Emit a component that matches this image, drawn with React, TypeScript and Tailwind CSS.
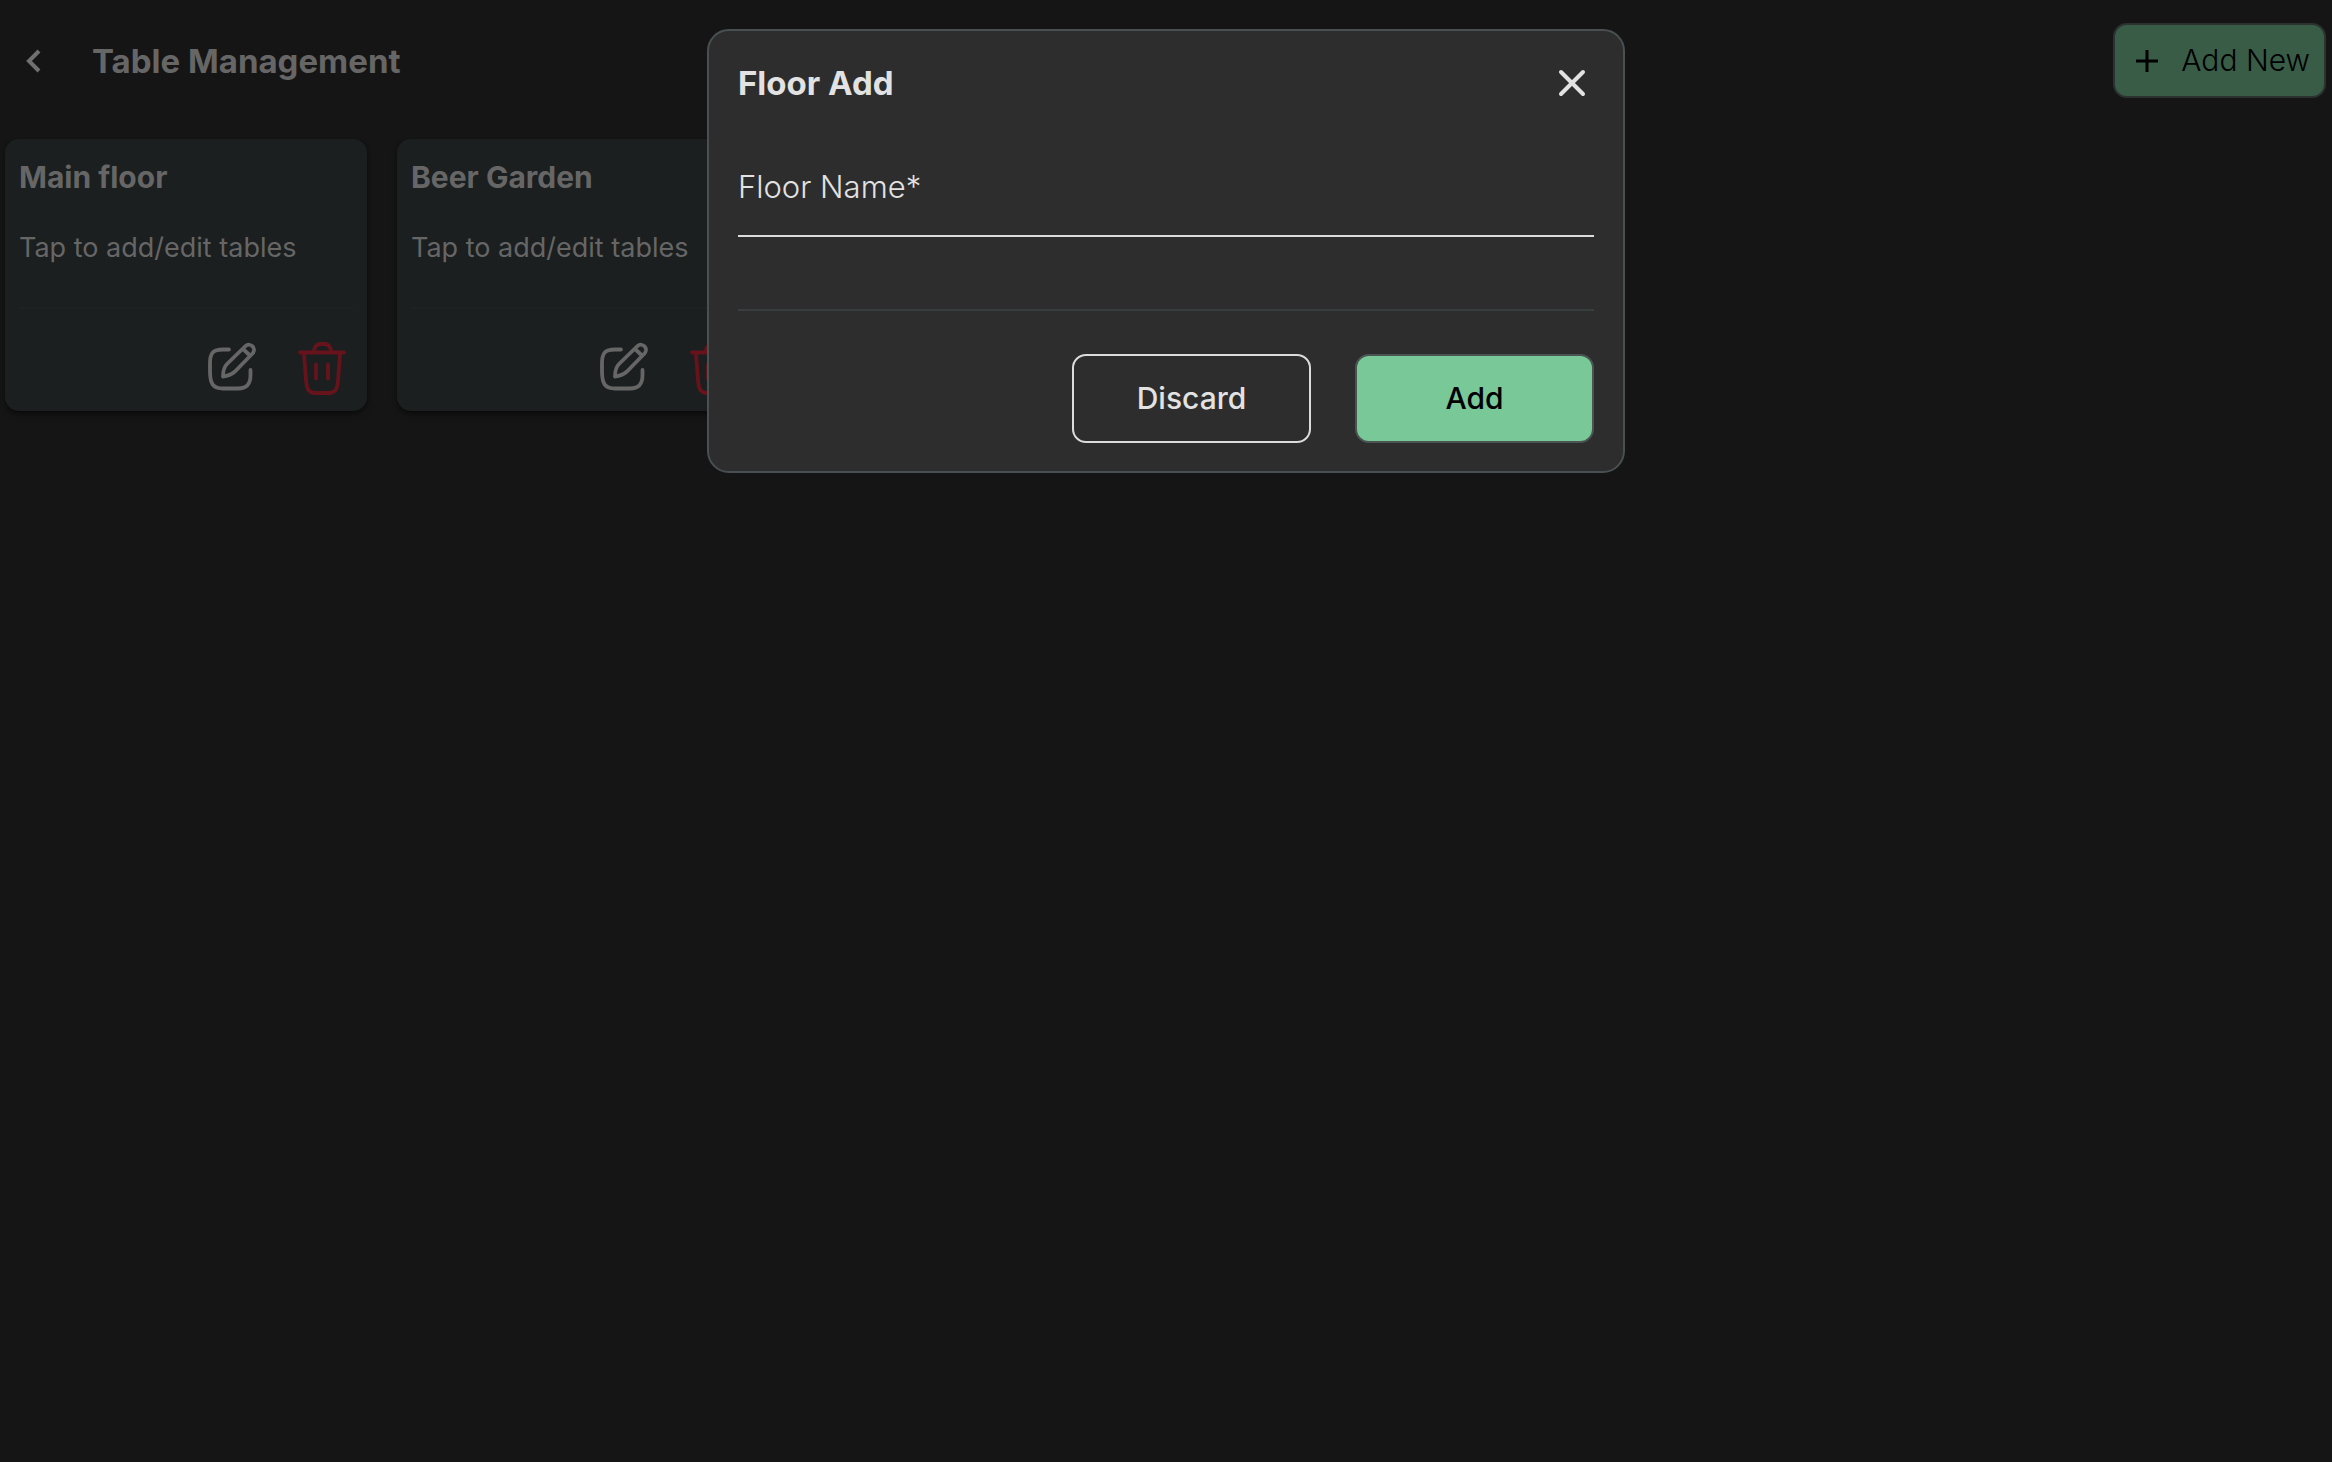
import { useState } from 'react'

interface Floor {
  id: number
  name: string
}

const floors: Floor[] = [
  { id: 1, name: 'Main floor' },
  { id: 2, name: 'Beer Garden' }
]

const EditIcon = () => (
  <svg width="50" height="52" viewBox="0 0 50 52" fill="none" stroke="currentColor" strokeWidth="3.8" strokeLinecap="round" strokeLinejoin="round">
    <path d="M22 8.500h-6C6 8.500 3 12 3 22v8c0 13 3 17.500 13 17.500h15c9 0 12.500-4.500 12.500-13.500v-5" />
    <path d="M16 35.500c0-5 1-9.500 4-12.500L38.500 5c5-4 11.500 2.500 7 7.500L28 30.500c-3.500 3-7 4.500-12 5z" />
    <path d="M36.500 8.500l6.500 6" />
  </svg>
)

const TrashIcon = () => (
  <svg width="50" height="56" viewBox="0 0 50 56" fill="none" stroke="currentColor" strokeWidth="3.8" strokeLinecap="round" strokeLinejoin="round">
    <path d="M3 13.500h44" />
    <path d="M7 14.500l2 27c.8 9 3 12.500 9 12.500h14c6 0 8.200-3.500 9-12.500l2-27" />
    <path d="M16.500 13c1-5.500 3.500-8 7-8h4c3 0 6 2.500 7 8" />
    <path d="M19 25.500v14M31 25.500v14" />
  </svg>
)

function FloorCard({ floor }: { floor: Floor }) {
  return (
    <div className="w-[362px] h-[272px] shrink-0 rounded-[14px] bg-[#1b1f20] px-[14px] pt-5 shadow-md shadow-black/40 flex flex-col">
      <h2 className="text-[30px] leading-9 font-bold">{floor.name}</h2>
      <p className="mt-[35px] text-[27px] leading-9">Tap to add/edit tables</p>
      <div className="mt-[41px] border-t-2 border-[#1e2224]" />
      <div className="mt-[30px] pr-[6px] flex justify-end items-center gap-10">
        <button aria-label={`Edit ${floor.name}`}>
          <EditIcon />
        </button>
        <button aria-label={`Delete ${floor.name}`} className="text-[#67131c]">
          <TrashIcon />
        </button>
      </div>
    </div>
  )
}

export default function App() {
  const [floorName, setFloorName] = useState('')

  return (
    <div className="min-h-screen overflow-hidden bg-[#151515] text-[#666] font-['Inter',sans-serif]">
      <header className="flex items-center justify-between pt-[23px] pr-[6px] pl-5">
        <div className="flex items-center gap-11">
          <button aria-label="Back" className="text-[#707070]">
            <svg width="28" height="28" viewBox="0 0 28 28" fill="none" stroke="currentColor" strokeWidth="4">
              <path d="M19 4L9 14l10 10" />
            </svg>
          </button>
          <h1 className="text-[33px] leading-10 font-bold">Table Management</h1>
        </div>
        <button className="h-[75px] rounded-[14px] border-2 border-[#2b3230] bg-[#395c47] pl-5 pr-[14px] flex items-center gap-[22px] text-[30px] font-light text-black">
          <svg width="24" height="24" viewBox="0 0 24 24" fill="none" stroke="currentColor" strokeWidth="3">
            <path d="M12 1v22M1 12h22" />
          </svg>
          Add New
        </button>
      </header>

      <main className="flex gap-[30px] pt-[41px] pl-[5px]">
        {floors.map((floor) => (
          <FloorCard key={floor.id} floor={floor} />
        ))}
      </main>

      <div className="fixed inset-0 flex items-start justify-center pt-[29px]">
        <form
          role="dialog"
          aria-labelledby="dialog-title"
          onSubmit={(e) => e.preventDefault()}
          className="w-[918px] rounded-[22px] border-2 border-[#485052] bg-[#2d2d2d] px-[29px] pt-8 pb-7 text-[#e2e2e2]"
        >
          <div className="flex items-center justify-between pr-2">
            <h2 id="dialog-title" className="text-[33px] leading-10 font-bold">Floor Add</h2>
            <button type="button" aria-label="Close">
              <svg width="28" height="28" viewBox="0 0 28 28" fill="none" stroke="currentColor" strokeWidth="4" strokeLinecap="round">
                <path d="M3 3l22 22M25 3L3 25" />
              </svg>
            </button>
          </div>

          <label htmlFor="floor-name" className="mt-[66px] block text-[31px] leading-9 font-light">Floor Name*</label>
          <input
            id="floor-name"
            value={floorName}
            onChange={(e) => setFloorName(e.target.value)}
            className="block h-8 w-full border-b-2 border-[#dcdcdc] bg-transparent text-2xl outline-none"
          />

          <div className="mt-[72px] border-t-2 border-[#383d3e]" />

          <div className="mt-[43px] flex justify-end gap-11">
            <button type="button" className="h-[89px] w-[239px] rounded-[14px] border-2 border-[#dcdcdc] text-[30px] font-medium">
              Discard
            </button>
            <button type="submit" className="h-[89px] w-[239px] rounded-[14px] border-2 border-[#4a5553] bg-[#79c898] text-[30px] font-medium text-black">
              Add
            </button>
          </div>
        </form>
      </div>
    </div>
  )
}
